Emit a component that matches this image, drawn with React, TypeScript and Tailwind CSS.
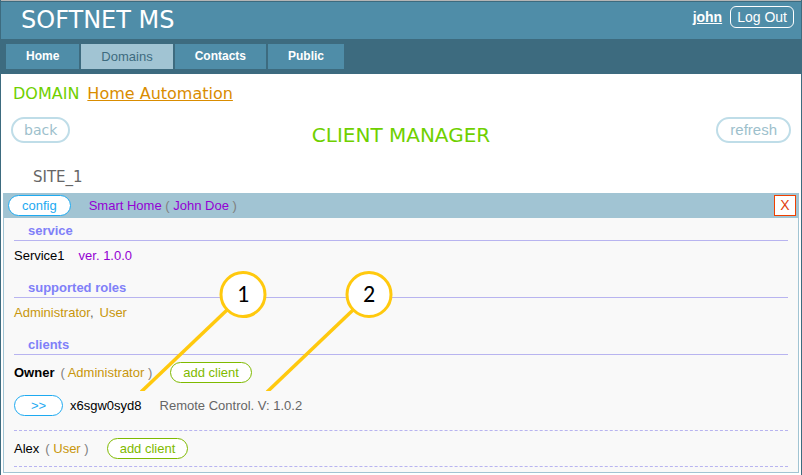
import type { ReactNode } from "react";

const verdana = "font-['Verdana','DejaVu_Sans',sans-serif]";

const tabs = [
  { label: "Home", active: false },
  { label: "Domains", active: true },
  { label: "Contacts", active: false },
  { label: "Public", active: false },
];

function Header() {
  return (
    <header className="border-t border-[#b5b5b5] bg-[#3d6b7f]">
      <div className="flex h-[38px] items-start justify-between border-t border-[#3d6b7f] bg-[#4f8da8] pr-[7px] pl-5 text-white">
        <div className={`text-2xl leading-[37px] ${verdana}`}>SOFTNET MS</div>
        <div className="flex items-center gap-2 pt-1">
          <a href="#john" className="text-sm font-bold underline">john</a>
          <button type="button" className="h-[22px] rounded-md border border-white px-1.5 text-sm leading-5">
            Log Out
          </button>
        </div>
      </div>
      <nav className="flex gap-0.5 px-[5px] py-[5px]">
        {tabs.map((tab) => (
          <a
            key={tab.label}
            href={`#${tab.label}`}
            className={
              tab.active
                ? "bg-[#a1c4d3] px-5 text-[13px] leading-[25px] text-[#3d6b7f]"
                : "bg-[#4f8da8] px-5 text-xs leading-[25px] font-bold text-white"
            }
          >
            {tab.label}
          </a>
        ))}
      </nav>
    </header>
  );
}

function AddClient() {
  return (
    <button type="button" className="h-[21px] rounded-full border border-[#7fba00] bg-white px-3 leading-[19px] text-[#7fba00]">
      add client
    </button>
  );
}

function SectionTitle({ children }: { children: ReactNode }) {
  return <h3 className="border-b border-[#b8b4f0] pt-0.5 pl-3.5 leading-[18px] font-bold text-[#8080f8]">{children}</h3>;
}

function Role({ name }: { name: string }) {
  return (
    <span className="text-[#7f7f7f]">
      ( <span className="text-[#c8960c]">{name}</span> )
    </span>
  );
}

function Callout({ cx, label }: { cx: number; label: string }) {
  return (
    <g>
      <path d={`M${cx - 16} 39 L${cx - 102} 121`} stroke="#ffc90e" strokeWidth="3.5" />
      <circle cx={cx} cy="23.5" r="22" fill="#fff" stroke="#ffc90e" strokeWidth="3" />
      <text x={cx} y="31" textAnchor="middle" fontSize="24" fill="#000" className="font-['Calibri','Carlito','Lato',sans-serif]">
        {label}
      </text>
    </g>
  );
}

export default function App() {
  return (
    <div className="relative bg-white font-['Arial','Liberation_Sans',sans-serif] text-[13px]">
      <div className="border-x border-[#3d6b7f]">
        <Header />
        <main className="px-0.5 pb-0.5">
          <div className={`flex items-baseline gap-2 px-2.5 pt-2 text-base leading-6 ${verdana}`}>
            <span className="text-[#6fd000]">DOMAIN</span>
            <a href="#home-automation" className="text-[#d98c00] underline">Home Automation</a>
          </div>
          <div className="grid grid-cols-[1fr_auto_1fr] items-start px-2 pt-[11px]">
            <button type="button" className={`h-[26px] justify-self-start rounded-full border-2 border-[#bfdde8] px-[11px] text-sm leading-[22px] text-[#9dbfcc] ${verdana}`}>
              back
            </button>
            <h1 className={`pt-1.5 text-xl leading-6 text-[#6fd000] ${verdana}`}>CLIENT MANAGER</h1>
            <button type="button" className="h-[26px] justify-self-end rounded-full border-2 border-[#bfdde8] px-3 text-[15px] leading-[22px] text-[#9dbfcc]">
              refresh
            </button>
          </div>
          <h2 className={`pt-5 pb-1.5 pl-[30px] text-[15px] leading-5 text-[#666] ${verdana}`}>SITE_1</h2>

          <section className="border border-t-0 border-[#a1c4d3] bg-[#f9f9f9]">
            <div className="flex h-[25px] items-center bg-[#a1c4d3] pr-0.5 pl-1">
              <button type="button" className="h-[21px] rounded-full border border-[#1eaaf1] bg-white px-[13px] leading-[19px] text-[#1eaaf1]">
                config
              </button>
              <div className="ml-[18px] flex-1 text-[#7f7f7f]">
                <span className="text-[#9400d3]">Smart Home</span> ( <span className="text-[#9400d3]">John Doe</span> )
              </div>
              <button type="button" aria-label="Remove" className="h-[21px] w-[22px] border border-[#f04000] bg-white text-sm leading-[19px] text-[#e04010]">
                X
              </button>
            </div>
            <div className="px-2.5 pt-0.5 pb-[5px]">
              <SectionTitle>service</SectionTitle>
              <div className="flex h-[30px] items-center gap-3.5">
                <span>Service1</span>
                <span className="text-[#9400d3]">ver. 1.0.0</span>
              </div>
              <div className="pt-1.5">
                <SectionTitle>supported roles</SectionTitle>
              </div>
              <div className="flex h-[30px] items-center gap-1.5 text-[#c8960c]">
                <span>Administrator<span className="text-[#666]">,</span></span>
                <span>User</span>
              </div>
              <div className="pt-1.5">
                <SectionTitle>clients</SectionTitle>
              </div>
              <div className="flex h-[35px] items-center">
                <span className="mr-1.5 font-bold">Owner</span>
                <Role name="Administrator" />
                <span className="w-[18px]" />
                <AddClient />
              </div>
              <div className="flex h-[41px] items-start border-b border-dashed border-[#b8b4f0] pt-[5px]">
                <button type="button" className="h-[21px] w-[49px] rounded-full border border-[#1eaaf1] bg-white leading-[19px] text-[#1eaaf1]">
                  &gt;&gt;
                </button>
                <span className="ml-[7px] leading-[21px]">x6sgw0syd8</span>
                <span className="ml-[18px] leading-[21px] text-[#666]">Remote Control. V: 1.0.2</span>
              </div>
              <div className="flex h-9 items-center border-b border-dashed border-[#b8b4f0]">
                <span className="mr-1.5">Alex</span>
                <Role name="User" />
                <span className="w-[18px]" />
                <AddClient />
              </div>
            </div>
          </section>
        </main>
      </div>
      <svg className="pointer-events-none absolute top-[271px] left-[140px] h-[120px] w-[260px]" viewBox="0 0 260 120">
        <Callout cx={103} label="1" />
        <Callout cx={229} label="2" />
      </svg>
    </div>
  );
}
